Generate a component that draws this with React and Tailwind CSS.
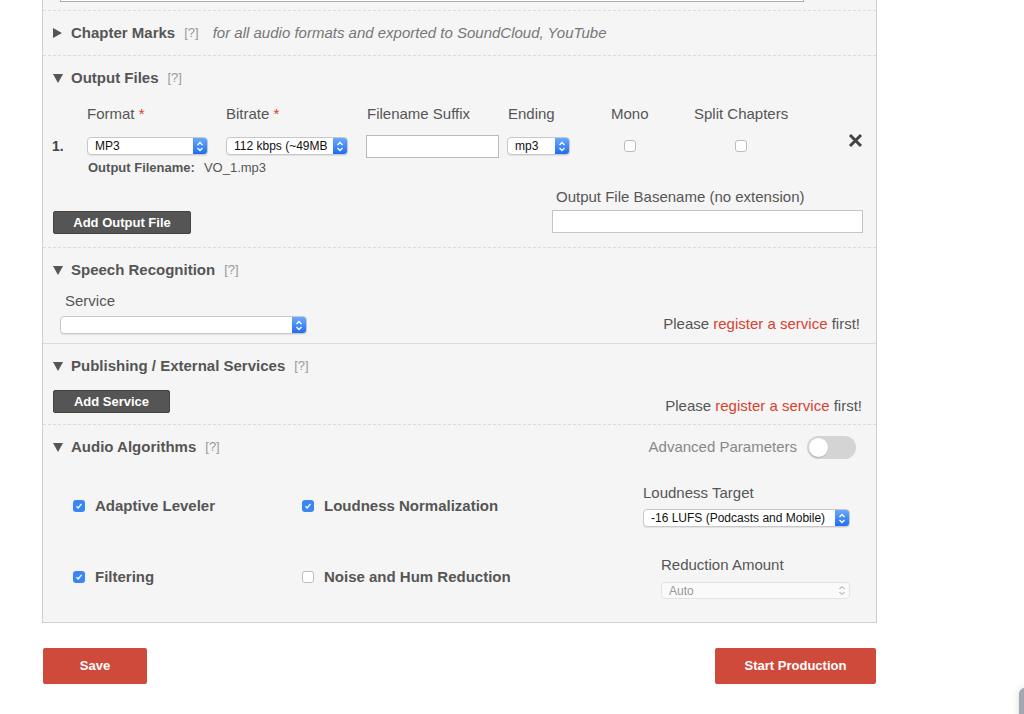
import React from "react";

const font = { fontFamily: '"Liberation Sans", Arial, sans-serif' };

function Tri({ open }) {
  return open ? (
    <svg width="10" height="9" viewBox="0 0 10 9" className="shrink-0">
      <polygon points="0,0 10,0 5,9" fill="#555" />
    </svg>
  ) : (
    <svg width="9" height="10" viewBox="0 0 9 10" className="shrink-0">
      <polygon points="0,0 9,5 0,10" fill="#555" />
    </svg>
  );
}

function Heading({ open, title, extra, right }) {
  return (
    <div className="flex items-center h-[20px] pl-[10px]">
      <div className="w-[18px] flex items-center">
        <Tri open={open} />
      </div>
      <span className="text-[15px] font-bold text-[#555]">{title}</span>
      <span className="ml-[9px] text-[13px] text-[#999]">[?]</span>
      {extra}
      {right}
    </div>
  );
}

function Stepper() {
  return (
    <svg width="8" height="11" viewBox="0 0 8 11">
      <path d="M1.5 4 L4 1.5 L6.5 4" fill="none" stroke="white" strokeWidth="1.3" />
      <path d="M1.5 7 L4 9.5 L6.5 7" fill="none" stroke="white" strokeWidth="1.3" />
    </svg>
  );
}

function Select({ w, value }) {
  return (
    <div
      className="h-[18px] flex items-stretch bg-white border border-[#c8c8c8] rounded-[4px] shadow-[0_1px_1px_rgba(0,0,0,0.08)] overflow-hidden"
      style={{ width: w }}
    >
      <div className="flex-1 flex items-center pl-[7px] text-[12px] text-[#111] whitespace-nowrap overflow-hidden">
        {value}
      </div>
      <div className="w-[14px] flex items-center justify-center bg-gradient-to-b from-[#6aa9fb] to-[#1f6cf0]">
        <Stepper />
      </div>
    </div>
  );
}

function Check({ checked }) {
  return checked ? (
    <span className="w-[12px] h-[12px] rounded-[3px] bg-[#3b86f7] flex items-center justify-center shrink-0">
      <svg width="8" height="8" viewBox="0 0 8 8">
        <path d="M1.5 4.2 L3.2 6 L6.5 1.8" fill="none" stroke="white" strokeWidth="1.3" />
      </svg>
    </span>
  ) : (
    <span className="w-[12px] h-[12px] rounded-[3px] bg-white border border-[#bdbdbd] shrink-0" />
  );
}

function Please() {
  return (
    <span className="text-[15px] leading-[18px] text-[#555] whitespace-nowrap">
      Please <span className="text-[#d8412f]">register a service</span> first!
    </span>
  );
}

function Algo({ checked, label, width, top }) {
  return (
    <div className={`${top} h-[20px] flex items-center`} style={{ width }}>
      <Check checked={checked} />
      <span className="ml-[10px] text-[15px] font-bold text-[#555]">{label}</span>
    </div>
  );
}

export default function App() {
  return (
    <div className="relative w-[1024px] h-[714px] bg-white overflow-hidden" style={font}>
      <div className="ml-[42px] w-[835px] bg-[#f5f5f5] border-x border-b border-[#cfcfcf]">
        {/* top input remnant */}
        <div className="h-[2px] ml-[17px] w-[744px] border-x border-b border-[#aaa] bg-white" />
        <div className="h-[8px]" />

        {/* Chapter Marks */}
        <div className="border-t border-dashed border-[#dcdcdc] pt-[12px] pb-[12px]">
          <Heading
            open={false}
            title="Chapter Marks"
            extra={
              <span className="ml-[14px] text-[15px] italic text-[#777]">
                for all audio formats and exported to SoundCloud, YouTube
              </span>
            }
          />
        </div>

        {/* Output Files */}
        <div className="border-t border-dashed border-[#dcdcdc] pt-[12px] pb-[14px]">
          <Heading open title="Output Files" />
          <div className="flex mt-[16px] pl-[9px] text-[15px] text-[#555]">
            <div className="w-[35px] flex flex-col">
              <div className="h-[20px] mb-[10px]" />
              <div className="h-[24px] flex items-center font-bold text-[14px] text-[#444]">1.</div>
            </div>
            <div className="w-[139px] flex flex-col">
              <div className="h-[20px] mb-[10px] leading-[20px]">
                Format <span className="text-[#e0392b]">*</span>
              </div>
              <div className="h-[24px] flex items-center">
                <Select w="121px" value="MP3" />
              </div>
            </div>
            <div className="w-[140px] flex flex-col">
              <div className="h-[20px] mb-[10px] leading-[20px]">
                Bitrate <span className="text-[#e0392b]">*</span>
              </div>
              <div className="h-[24px] flex items-center">
                <Select w="122px" value="112 kbps (~49MB" />
              </div>
            </div>
            <div className="w-[141px] flex flex-col">
              <div className="h-[20px] mb-[10px] leading-[20px] pl-[1px]">Filename Suffix</div>
              <div className="h-[24px] flex items-center">
                <div className="w-[133px] h-[23px] bg-white border border-[#bbb]" />
              </div>
            </div>
            <div className="w-[104px] flex flex-col">
              <div className="h-[20px] mb-[10px] leading-[20px] pl-[1px]">Ending</div>
              <div className="h-[24px] flex items-center">
                <Select w="63px" value="mp3" />
              </div>
            </div>
            <div className="w-[83px] flex flex-col">
              <div className="w-fit flex flex-col items-center">
                <div className="h-[20px] mb-[10px] leading-[20px]">Mono</div>
                <div className="h-[24px] flex items-center">
                  <Check />
                </div>
              </div>
            </div>
            <div className="w-[154px] flex flex-col">
              <div className="w-fit flex flex-col items-center">
                <div className="h-[20px] mb-[10px] leading-[20px]">Split Chapters</div>
                <div className="h-[24px] flex items-center">
                  <Check />
                </div>
              </div>
            </div>
            <div className="flex flex-col">
              <div className="h-[20px] mb-[10px]" />
              <div className="h-[24px] flex items-center -mt-[6px]">
                <svg width="15" height="15" viewBox="0 0 15 15">
                  <path d="M2 2 L13 13 M13 2 L2 13" stroke="#444" strokeWidth="3" />
                </svg>
              </div>
            </div>
          </div>
          <div className="h-[20px] flex items-center pl-[45px] text-[13px] text-[#555]">
            <span className="font-bold">Output Filename:</span>
            <span className="ml-[9px]">VO_1.mp3</span>
          </div>
          <div className="mt-[9px] flex items-end justify-between pl-[10px] pr-[13px]">
            <div className="w-[138px] h-[23px] bg-[#555] border border-[#444] rounded-[2px] flex items-center justify-center text-white text-[13px] font-bold mb-[-1px]">
              Add Output File
            </div>
            <div className="flex flex-col">
              <div className="h-[20px] leading-[20px] pl-[4px] text-[15px] text-[#555]">
                Output File Basename (no extension)
              </div>
              <div className="mt-[3px] w-[311px] h-[23px] bg-white border border-[#c4c4c4]" />
            </div>
          </div>
        </div>

        {/* Speech Recognition */}
        <div className="border-t border-dashed border-[#dcdcdc] pt-[12px] pb-[9px]">
          <Heading open title="Speech Recognition" />
          <div className="mt-[11px] pl-[22px] h-[20px] leading-[20px] text-[15px] text-[#555]">Service</div>
          <div className="mt-[5px] h-[18px] flex items-center justify-between pl-[17px] pr-[16px]">
            <Select w="247px" value="" />
            <span className="-mt-[2px]">
              <Please />
            </span>
          </div>
        </div>

        {/* Publishing */}
        <div className="border-t border-[#dcdcdc] pt-[12px] pb-[11px]">
          <Heading open title="Publishing / External Services" />
          <div className="mt-[14px] h-[23px] flex items-end justify-between pl-[10px] pr-[14px]">
            <div className="w-[117px] h-[23px] bg-[#555] border border-[#444] rounded-[2px] flex items-center justify-center text-white text-[13px] font-bold">
              Add Service
            </div>
            <div className="-mb-[5px]">
              <Please />
            </div>
          </div>
        </div>

        {/* Audio Algorithms */}
        <div className="border-t border-dashed border-[#dcdcdc] pt-[12px] pb-[23px]">
          <Heading
            open
            title="Audio Algorithms"
            right={
              <div className="ml-auto mr-[20px] flex items-center">
                <span className="text-[15px] text-[#888]">Advanced Parameters</span>
                <div className="ml-[10px] w-[49px] h-[23px] rounded-full bg-[#d4d4d4] flex items-center pl-[2px]">
                  <div className="w-[19px] h-[19px] rounded-full bg-white shadow-[0_1px_1px_rgba(0,0,0,0.15)]" />
                </div>
              </div>
            }
          />
          <div className="mt-[26px] flex items-start pl-[30px]">
            <Algo checked label="Adaptive Leveler" width="229px" top="mt-[13px]" />
            <Algo checked label="Loudness Normalization" width="341px" top="mt-[13px]" />
            <div className="flex flex-col">
              <div className="h-[20px] leading-[20px] text-[15px] text-[#555]">Loudness Target</div>
              <div className="mt-[6px]">
                <Select w="207px" value="-16 LUFS (Podcasts and Mobile)" />
              </div>
            </div>
          </div>
          <div className="mt-[28px] flex items-start pl-[30px]">
            <Algo checked label="Filtering" width="229px" top="mt-[12px]" />
            <Algo label="Noise and Hum Reduction" width="359px" top="mt-[12px]" />
            <div className="flex flex-col">
              <div className="h-[20px] leading-[20px] text-[15px] text-[#555]">Reduction Amount</div>
              <div className="mt-[7px] w-[189px] h-[17px] bg-[#fafafa] border border-[#e2e2e2] rounded-[4px] flex items-center justify-between pl-[7px] pr-[3px]">
                <span className="text-[12px] text-[#999]">Auto</span>
                <svg width="8" height="11" viewBox="0 0 8 11">
                  <path d="M1.5 4 L4 1.5 L6.5 4" fill="none" stroke="#999" strokeWidth="1" />
                  <path d="M1.5 7 L4 9.5 L6.5 7" fill="none" stroke="#999" strokeWidth="1" />
                </svg>
              </div>
            </div>
          </div>
        </div>
      </div>

      {/* bottom buttons */}
      <div className="mt-[25px] ml-[43px] w-[833px] flex justify-between">
        <div className="w-[104px] h-[36px] bg-[#cf4a3b] rounded-[2px] flex items-center justify-center text-white text-[13px] font-bold">
          Save
        </div>
        <div className="w-[161px] h-[36px] bg-[#cf4a3b] rounded-[2px] flex items-center justify-center text-white text-[13px] font-bold">
          Start Production
        </div>
      </div>

      {/* corner widget partly visible */}
      <div className="absolute left-[1019px] top-[688px] w-[30px] h-[40px] rounded-tl-[6px] bg-[#a3a7b0] shadow-[0_0_8px_rgba(0,0,0,0.15)]" />
    </div>
  );
}
